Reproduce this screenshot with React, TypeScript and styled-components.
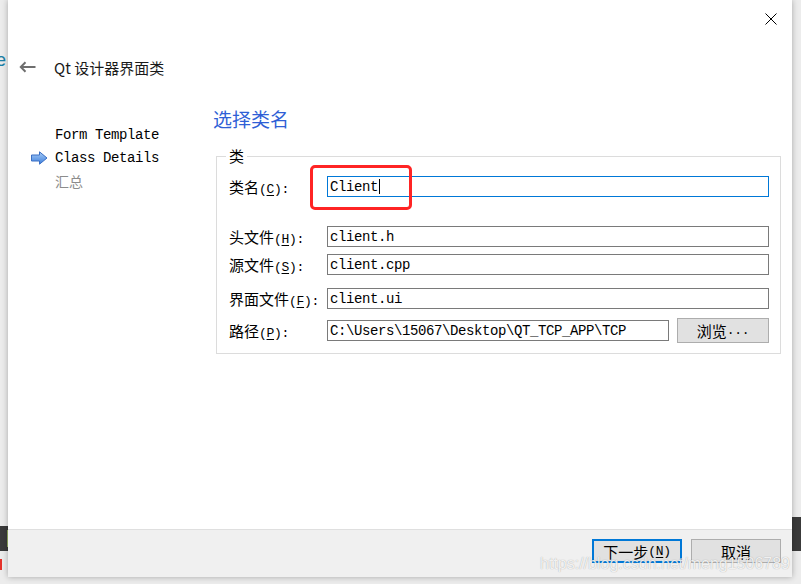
import React from 'react'
import styled, { createGlobalStyle } from 'styled-components'

const GlobalStyle = createGlobalStyle`
  html, body {
    margin: 0;
    padding: 0;
    background: #ededed;
    overflow: hidden;
  }
`

const cjk = `"Noto Sans CJK SC", "Liberation Sans", sans-serif`
const mono = `"Liberation Mono", "Noto Sans CJK SC", monospace`

// mnemonic suffix like "(C):" drawn in half-width glyphs, key letter underlined
const Key = ({ k, tail = '' }: { k: string; tail?: string }) => (
  <Half>
    (<u>{k}</u>){tail}
  </Half>
)

const App = () => {
  return (
    <Desktop>
      <GlobalStyle />
      <BehindLetter>e</BehindLetter>
      <BehindBar $side="left" $top={526} $height={25}>
        <BarAccent />
      </BehindBar>
      <BehindBar $side="right" $top={517} $height={34} />
      <BehindMark />

      <Dialog>
        <TopBar>
          <CloseButton aria-label="close">
            <svg width="12" height="12" viewBox="0 0 12 12">
              <path d="M0.5 0.5 L11.5 11.5 M11.5 0.5 L0.5 11.5" stroke="#000" strokeWidth="1" />
            </svg>
          </CloseButton>
        </TopBar>

        <Header>
          <BackButton aria-label="back">
            <svg width="17" height="12" viewBox="0 0 17 12">
              <path d="M16.5 6 H2 M6.5 1.3 L1.8 6 L6.5 10.7" stroke="#6e6e6e" strokeWidth="2" fill="none" />
            </svg>
          </BackButton>
          <Title>Qt 设计器界面类</Title>
        </Header>

        <Body>
          <Sidebar>
            <NavItem>Form Template</NavItem>
            <NavItem $active>
              <NavArrow width="17" height="14" viewBox="0 0 17 14">
                <defs>
                  <linearGradient id="navArrowFill" x1="0" y1="0" x2="0" y2="1">
                    <stop offset="0" stopColor="#a9cdf7" />
                    <stop offset="1" stopColor="#3d7fdc" />
                  </linearGradient>
                </defs>
                <path
                  d="M0.5 4 H8.5 V0.8 L16 7 L8.5 13.2 V10 H0.5 Z"
                  fill="url(#navArrowFill)"
                  stroke="#3b6fc4"
                  strokeWidth="1"
                  strokeLinejoin="round"
                />
              </NavArrow>
              Class Details
            </NavItem>
            <NavItem $muted>汇总</NavItem>
          </Sidebar>

          <Content>
            <Heading>选择类名</Heading>
            <Group>
              <Legend>类</Legend>

              <Row $gap={11}>
                <Label>
                  类名<Key k="C" tail=":" />
                </Label>
                <Field $focused>
                  Client
                  <Caret />
                </Field>
                <Highlight />
              </Row>

              <Row $gap={29}>
                <Label>
                  头文件<Key k="H" tail=":" />
                </Label>
                <Field>client.h</Field>
              </Row>

              <Row $gap={7}>
                <Label>
                  源文件<Key k="S" tail=":" />
                </Label>
                <Field>client.cpp</Field>
              </Row>

              <Row $gap={13}>
                <Label>
                  界面文件<Key k="F" tail=":" />
                </Label>
                <Field>client.ui</Field>
              </Row>

              <Row $gap={9} $height={25}>
                <Label>
                  路径<Key k="P" tail=":" />
                </Label>
                <PathGroup>
                  <Field>C:\Users\15067\Desktop\QT_TCP_APP\TCP</Field>
                  <Button $width={92} $height={25}>
                    浏览<Half>...</Half>
                  </Button>
                </PathGroup>
              </Row>
            </Group>
          </Content>
        </Body>

        <Footer>
          <Button $primary>
            下一步<Key k="N" />
          </Button>
          <Button>取消</Button>
          <Watermark>https://blog.csdn.net/meng1506789</Watermark>
        </Footer>
      </Dialog>
    </Desktop>
  )
}

export default App

const Desktop = styled.div`
  position: relative;
  box-sizing: border-box;
  width: 801px;
  height: 584px;
  padding-left: 8px;
  overflow: hidden;
  background: #ececec;
`

const BehindLetter = styled.span`
  position: absolute;
  top: 50px;
  left: -4px;
  font-family: "Liberation Sans", sans-serif;
  font-size: 18px;
  color: #1b7fa6;
`

const BehindBar = styled.div<{ $side: 'left' | 'right'; $top: number; $height: number }>`
  position: absolute;
  top: ${({ $top }) => $top}px;
  ${({ $side }) => ($side === 'left' ? 'left: 0; width: 8px;' : 'right: 0; width: 9px;')}
  height: ${({ $height }) => $height}px;
  background: #3a3a3a;
`

const BarAccent = styled.div`
  position: absolute;
  top: 4px;
  right: 0;
  width: 1px;
  height: 17px;
  background: #93ad62;
`

const BehindMark = styled.div`
  position: absolute;
  top: 559px;
  left: 0;
  width: 2px;
  height: 11px;
  background: #e5322a;
`

const Dialog = styled.div`
  position: relative;
  z-index: 1;
  display: flex;
  flex-direction: column;
  width: 784px;
  height: 577px;
  background: #fff;
  box-shadow: 0 0 6px rgba(0, 0, 0, 0.3);
`

const TopBar = styled.div`
  box-sizing: border-box;
  display: flex;
  justify-content: flex-end;
  height: 40px;
  padding: 13px 15px 0 0;
`

const CloseButton = styled.div`
  display: flex;
  width: 12px;
  height: 12px;
`

const Header = styled.div`
  box-sizing: border-box;
  display: flex;
  align-items: center;
  gap: 18px;
  height: 54px;
  padding-left: 11px;
`

const BackButton = styled.div`
  display: flex;
  align-items: center;
`

const Title = styled.div`
  font-family: ${cjk};
  font-size: 15px;
  color: #1a1a1a;
`

const Body = styled.div`
  display: flex;
  flex: 1;
  min-height: 0;
`

const Sidebar = styled.div`
  box-sizing: border-box;
  width: 205px;
  padding: 29px 0 0 23px;
`

const NavItem = styled.div<{ $active?: boolean; $muted?: boolean }>`
  display: flex;
  align-items: center;
  gap: 7px;
  height: 23px;
  padding-left: ${({ $active }) => ($active ? 0 : 24)}px;
  font-family: ${({ $muted }) => ($muted ? cjk : mono)};
  font-size: ${({ $muted }) => ($muted ? 14 : 14)}px;
  letter-spacing: ${({ $muted }) => ($muted ? 0 : -0.4)}px;
  color: ${({ $muted }) => ($muted ? '#8c8c8c' : '#000')};
  white-space: pre;
`

const NavArrow = styled.svg`
  display: block;
  flex: none;
`

const Content = styled.div`
  flex: 1;
  padding: 13px 11px 0 0;
`

const Heading = styled.h2`
  margin: 0 0 16px;
  font-family: ${cjk};
  font-size: 19px;
  font-weight: 400;
  line-height: 24px;
  color: #2f5fd6;
`

const Group = styled.fieldset`
  margin: 0 0 0 3px;
  padding: 0 11px 10px 12px;
  border: 1px solid #dcdcdc;
`

const Legend = styled.legend`
  margin-left: -3px;
  padding: 0 3px;
  font-family: ${cjk};
  font-size: 15px;
  line-height: 18px;
  color: #000;
`

const Row = styled.div<{ $gap: number; $height?: number }>`
  position: relative;
  display: grid;
  grid-template-columns: 98px 1fr;
  align-items: center;
  height: ${({ $height }) => $height ?? 21}px;
  margin-top: ${({ $gap }) => $gap}px;
`

const Label = styled.div`
  font-family: ${cjk};
  font-size: 15px;
  color: #000;
  white-space: nowrap;
`

const Half = styled.span`
  font-family: ${mono};
  font-size: 13px;
  letter-spacing: -0.3px;
  white-space: pre;

  u {
    text-underline-offset: 2px;
  }
`

const Field = styled.div<{ $focused?: boolean }>`
  box-sizing: border-box;
  display: flex;
  align-items: center;
  flex: 1;
  height: 21px;
  padding: 0 2px;
  border: 1px solid ${({ $focused }) => ($focused ? '#0078d7' : '#7a7a7a')};
  background: #fff;
  font-family: ${mono};
  font-size: 14px;
  letter-spacing: -0.4px;
  color: #000;
  white-space: pre;
  overflow: hidden;
`

const Caret = styled.span`
  width: 1px;
  height: 15px;
  margin-left: 1px;
  background: #000;
`

const Highlight = styled.div`
  position: absolute;
  top: -11px;
  left: 81px;
  box-sizing: border-box;
  width: 102px;
  height: 45px;
  border: 3px solid #ff2424;
  border-radius: 5px;
  pointer-events: none;
`

const PathGroup = styled.div`
  display: flex;
  align-items: center;
  gap: 8px;
`

const Button = styled.div<{ $primary?: boolean; $width?: number; $height?: number }>`
  box-sizing: border-box;
  display: flex;
  align-items: center;
  justify-content: center;
  flex: none;
  width: ${({ $width }) => $width ?? 90}px;
  height: ${({ $height }) => $height ?? 24}px;
  border: ${({ $primary }) => ($primary ? '2px solid #0078d7' : '1px solid #adadad')};
  background: #e1e1e1;
  font-family: ${cjk};
  font-size: 15px;
  color: #000;
`

const Footer = styled.div`
  position: relative;
  box-sizing: border-box;
  display: flex;
  justify-content: flex-end;
  align-items: flex-start;
  gap: 9px;
  height: 48px;
  padding: 9px 11px 0 0;
  border-top: 1px solid #dfdfdf;
  background: #f0f0f0;
`

const Watermark = styled.span`
  position: absolute;
  top: 25px;
  right: 2px;
  font-family: "Liberation Sans", sans-serif;
  font-size: 16px;
  color: rgba(255, 255, 255, 0.85);
  text-shadow: 0 0 1px rgba(0, 0, 0, 0.35);
  pointer-events: none;
`
